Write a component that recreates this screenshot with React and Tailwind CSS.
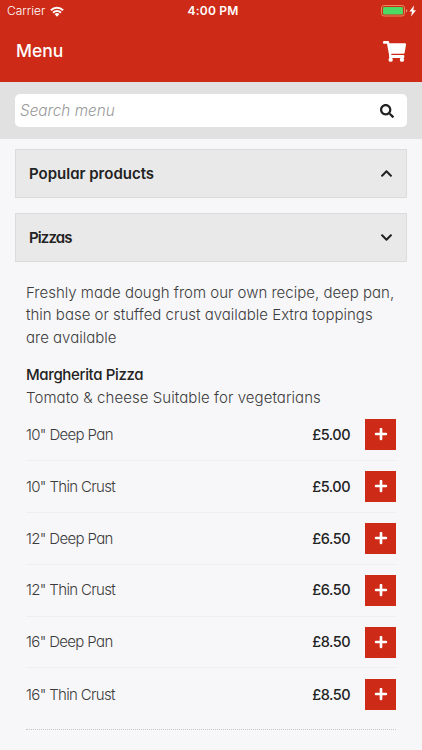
import { useState } from 'react';
import { FaChevronDown, FaChevronUp, FaPlus, FaSearch } from 'react-icons/fa';

const sizes = [
  { name: '10" Deep Pan', price: '£5.00' },
  { name: '10" Thin Crust', price: '£5.00' },
  { name: '12" Deep Pan', price: '£6.50' },
  { name: '12" Thin Crust', price: '£6.50' },
  { name: '16" Deep Pan', price: '£8.50' },
  { name: '16" Thin Crust', price: '£8.50' },
];

const StatusBar = () => (
  <div className="grid h-[22px] grid-cols-3 items-center pl-[7px] pr-[5px] font-[Inter] text-[12px] leading-none text-white [font-feature-settings:normal]">
    <div className="flex items-center gap-[5px]">
      <span className="font-light">Carrier</span>
      <svg width="14" height="11" viewBox="0 0 15 11" fill="none" stroke="white" strokeWidth="2.1">
        <path d="M1 4.2a9.2 9.2 0 0 1 13 0" />
        <path d="M3.3 6.8a5.9 5.9 0 0 1 8.4 0" />
        <path d="M7.5 11 5 8.5a3.5 3.5 0 0 1 5 0z" fill="white" stroke="none" />
      </svg>
    </div>
    <span className="pl-[2px] text-center font-semibold tracking-[0.2px]">4:00 PM</span>
    <svg className="justify-self-end" width="36" height="12" viewBox="0 0 36 12">
      <rect x="0.5" y="0.5" width="23" height="10.5" rx="2.5" fill="none" stroke="#e58a5f" strokeWidth="1" />
      <rect x="2" y="2" width="20" height="7.5" rx="1.3" fill="#4cd964" />
      <path d="M25 4v3.6q1.4-.5 1.4-1.8T25 4" fill="#e58a7e" />
      <path d="M33 0.5 28.4 6.5h2.6l-1 5L35 5.2h-2.7z" fill="white" />
    </svg>
  </div>
);

const CartIcon = () => (
  <svg width="23" height="21" viewBox="0 0 69 63" fill="white">
    <path d="M3 0h12q3 0 3.500 3L19 7h47q4 0 3 4l-4 24q-.5 3-4 3H25v4h36q3 0 3 3v3q0 3-3 3H22q-4 0-4-4v-6L12 8H3Q0 8 0 5V3Q0 0 3 0z" />
    <circle cx="23" cy="56" r="6.500" />
    <circle cx="57" cy="56" r="6.500" />
  </svg>
);

const AccordionHeader = ({ title, titleClass = '', open, onClick }) => (
  <button
    onClick={onClick}
    className="flex h-[49px] w-full items-center justify-between border border-[#dbdbdb] bg-[#e9e9e9] px-[13px] text-left text-[15px] font-semibold text-[#222]"
  >
    <span className={`pt-[2px] ${titleClass}`}>{title}</span>
    {open ? <FaChevronDown size={13} /> : <FaChevronUp size={13} />}
  </button>
);

export default function App() {
  const [pizzasOpen, setPizzasOpen] = useState(true);

  return (
    <div className="h-[750px] overflow-hidden bg-[#f7f7f9] font-[Inter,sans-serif] text-[#3c3c3c] [font-feature-settings:'cv11']">
      <header className="h-[82px] bg-[#cd2b17]">
        <StatusBar />
        <div className="flex h-[58px] items-center justify-between pl-4 pr-4 text-white">
          <h1 className="pt-px text-[17.5px] font-medium">Menu</h1>
          <CartIcon />
        </div>
      </header>

      <div className="h-[57px] bg-[#e1e1e1] px-[15px] pt-3">
        <div className="flex h-[33px] items-center justify-between rounded-[5px] bg-white pl-[5px] pr-[13px]">
          <input
            placeholder="Search menu"
            className="w-60 pt-px text-[15.3px] font-light italic outline-none placeholder:text-[#999]"
          />
          <FaSearch size={14} className="text-[#222]" />
        </div>
      </div>

      <main className="px-[15px] pt-[10px]">
        <AccordionHeader title="Popular products" />
        <div className="h-[15px]"></div>
        <AccordionHeader
          title="Pizzas"
          titleClass="tracking-[-0.9px]"
          open={pizzasOpen}
          onClick={() => setPizzasOpen(!pizzasOpen)}
        />

        {pizzasOpen && (
          <section className="px-[11px] pt-5 text-[15px] font-light leading-[22.4px]">
            <p className="whitespace-nowrap">
              Freshly made dough from our own recipe, deep pan,
              <br />
              thin base or stuffed crust available Extra toppings
              <br />
              are available
            </p>
            <h2 className="mt-[15px] font-medium tracking-[-0.35px] text-[#222]">Margherita Pizza</h2>
            <p className="tracking-[0.07px]">Tomato &amp; cheese Suitable for vegetarians</p>
            <ul>
              {sizes.map((size) => (
                <li key={size.name} className="flex h-[51.9px] items-center border-b border-[#efeff1] last:border-b-0">
                  <span className="flex-1 pt-px tracking-[-0.65px]">{size.name}</span>
                  <span className="mr-[15px] pt-px text-[14.5px] font-medium tracking-[-0.5px] text-[#222]">{size.price}</span>
                  <button className="flex size-[31px] items-center justify-center bg-[#cd2b17] text-white">
                    <FaPlus size={14} />
                  </button>
                </li>
              ))}
            </ul>
            <div className="mt-[9px] border-b border-dotted border-[#c8c8ca]"></div>
          </section>
        )}
      </main>
    </div>
  );
}
